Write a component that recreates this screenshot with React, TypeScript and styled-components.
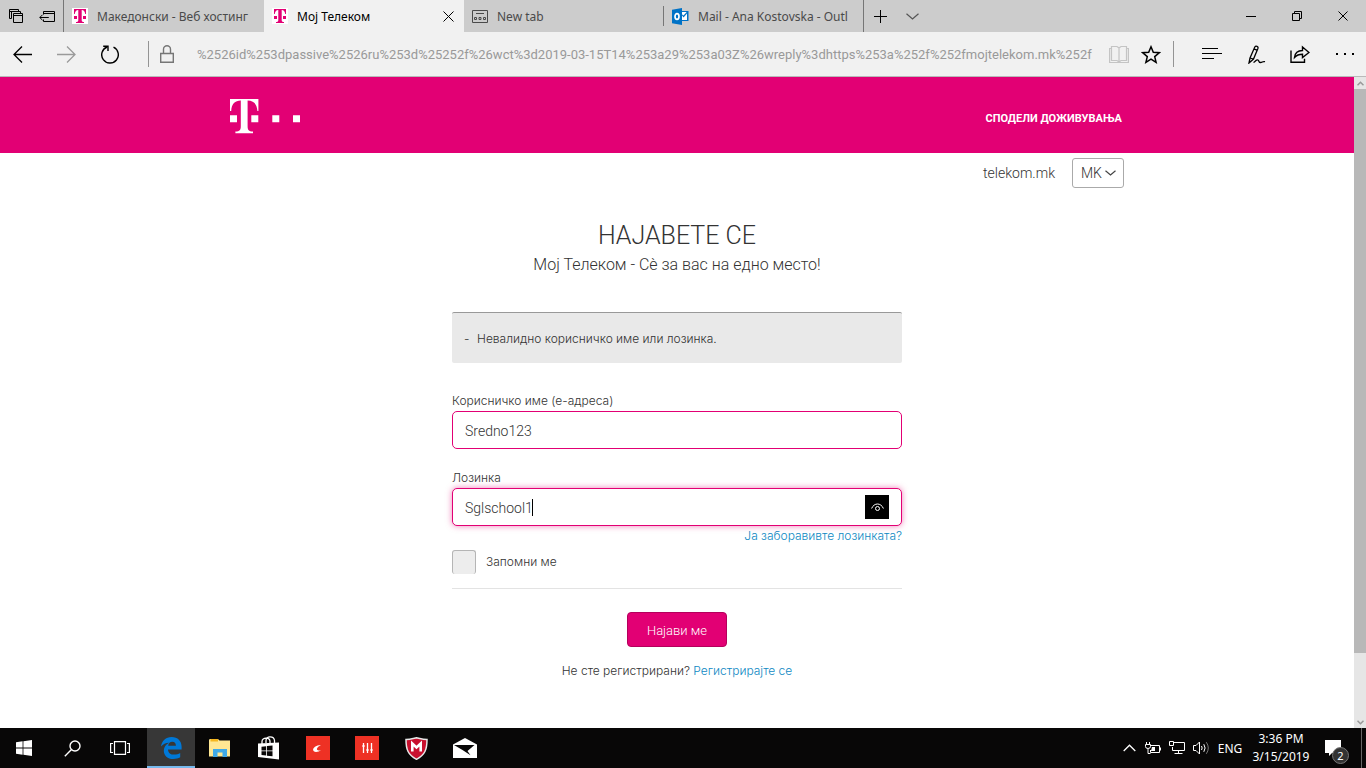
import React from "react";
import styled, { createGlobalStyle } from "styled-components";

const magenta = "#e20074";
const uiFont = `"Noto Sans", "Open Sans", sans-serif`;
const pageFont = `Roboto, "Liberation Sans", sans-serif`;
const smallFont = `Inter, Roboto, sans-serif`;

const GlobalStyle = createGlobalStyle`
  *, *::before, *::after { box-sizing: border-box; }
  body { margin: 0; font-family: ${pageFont}; color: #333; background: #fff; }
  button, input, select { font: inherit; color: inherit; }
  svg { display: block; flex: none; }
`;

const Screen = styled.div`
  display: flex;
  flex-direction: column;
  min-height: 100vh;
`;

/* ---------- browser chrome ---------- */

const PlainButton = styled.button`
  display: flex;
  align-items: center;
  justify-content: center;
  padding: 0;
  border: 0;
  background: none;
`;

const TabBar = styled.div`
  display: flex;
  height: 32px;
  background: #ccc;
  font-family: ${uiFont};
  font-size: 12px;
  color: #4a4a4a;
`;

const TabActions = styled.div`
  display: flex;
  width: 64px;
  border-right: 1px solid #767676;
`;

const TabAction = styled(PlainButton)`
  width: 32px;
`;

const Tab = styled.div<{ $active?: boolean; $divider?: "short" | "full" }>`
  position: relative;
  display: flex;
  align-items: center;
  gap: 9px;
  width: 200px;
  padding: 0 10px 0 8px;
  color: ${(p) => (p.$active ? "#000" : "inherit")};
  background: ${(p) => (p.$active ? "#f1f1f1" : "transparent")};

  &::after {
    content: "";
    display: ${(p) => (p.$divider ? "block" : "none")};
    position: absolute;
    right: 0;
    top: ${(p) => (p.$divider === "full" ? "0" : "6px")};
    bottom: ${(p) => (p.$divider === "full" ? "0" : "6px")};
    width: 1px;
    background: #767676;
  }
`;

const TabTitle = styled.span`
  flex: 1;
  overflow: hidden;
  white-space: nowrap;
`;

const TabTool = styled(PlainButton)`
  width: 32px;
`;

const WindowControls = styled.div`
  display: flex;
  margin-left: auto;
`;

const WindowButton = styled(PlainButton)`
  width: 46px;
`;

const Toolbar = styled.div`
  display: flex;
  align-items: center;
  height: 45px;
  padding-right: 12px;
  background: #f1f1f1;
  border-bottom: 1px solid #b9b9b9;
`;

const ToolButton = styled(PlainButton)<{ $width?: number }>`
  width: ${(p) => p.$width ?? 44}px;
  height: 44px;
`;

const ToolDivider = styled.span<{ $gap?: number }>`
  width: 1px;
  height: 26px;
  margin-left: ${(p) => p.$gap ?? 0}px;
  background: #949494;
`;

const Address = styled.input`
  flex: 1;
  min-width: 0;
  height: 24px;
  padding: 0 0 0 12px;
  border: 0;
  outline: 0;
  background: none;
  font-size: 13px;
  color: #999;
`;

/* ---------- page ---------- */

const Viewport = styled.div`
  display: flex;
  flex: 1;
`;

const Page = styled.div`
  flex: 1;
  min-width: 0;
`;

const Container = styled.div`
  display: flex;
  align-items: center;
  max-width: 894px;
  margin: 0 auto;
`;

const Banner = styled.header`
  padding: 22px 0 19px;
  background: ${magenta};
`;

const Slogan = styled.span`
  margin-left: auto;
  padding: 4px 2px 0 0;
  font-size: 11px;
  line-height: 16px;
  font-weight: 700;
  color: #fff;
`;

const SubNav = styled(Container)`
  justify-content: flex-end;
  gap: 17px;
  padding-top: 5px;
`;

const SiteLink = styled.a`
  font-size: 14px;
  font-weight: 300;
  color: #333;
  text-decoration: none;
`;

const LanguageBox = styled.div`
  position: relative;
`;

const Language = styled.select`
  appearance: none;
  display: block;
  width: 52px;
  height: 30px;
  padding: 0 8px;
  border: 1px solid #aaa;
  border-radius: 3px;
  background: #fff;
  font-size: 14px;
  font-weight: 300;
`;

const LanguageArrow = styled.span`
  position: absolute;
  top: 12px;
  right: 8px;
  pointer-events: none;
`;

const LoginForm = styled.form`
  display: flex;
  flex-direction: column;
  max-width: 450px;
  margin: 0 auto;
  padding-top: 32px;
  font-family: ${smallFont};
  font-size: 12px;
  line-height: 16px;
  font-weight: 300;
`;

const Title = styled.h1`
  margin: 0;
  font-family: ${pageFont};
  font-size: 25px;
  line-height: 32px;
  font-weight: 300;
  text-align: center;
`;

const Subtitle = styled.p`
  margin: 0;
  font-family: ${pageFont};
  font-size: 16px;
  line-height: 26px;
  text-align: center;
`;

const Alert = styled.ul`
  display: flex;
  align-items: center;
  height: 51px;
  margin: 34px 0 30px;
  padding: 2px 12px 0;
  border-top: 1px solid #999;
  border-radius: 2px;
  background: #e9e9e9;
  list-style: none;

  li::before {
    content: "-";
    display: inline-block;
    width: 13px;
  }
`;

const Label = styled.label``;

const Field = styled.div`
  position: relative;
  margin: 2px 0 21px;
`;

const TextInput = styled.input<{ $focused?: boolean }>`
  display: block;
  width: 100%;
  height: 38px;
  padding: 2px 12px 0;
  border: 1px solid ${magenta};
  border-radius: 5px;
  outline: 0;
  background: #fff;
  box-shadow: ${(p) => (p.$focused ? "0 0 6px rgba(226, 0, 116, 0.5)" : "none")};
  font-family: ${pageFont};
  font-size: 14px;
  font-weight: 300;
`;

const PasswordField = styled(Field)`
  margin-bottom: 2px;
`;

const Caret = styled.span`
  position: absolute;
  left: 80px;
  top: 11px;
  width: 1px;
  height: 17px;
  background: #000;
`;

const Reveal = styled(PlainButton)`
  position: absolute;
  right: 13px;
  top: 7px;
  width: 24px;
  height: 24px;
  background: #000;
`;

const Link = styled.a`
  color: #0e88c3;
  text-decoration: none;
`;

const ForgotLink = styled(Link)`
  align-self: flex-end;
`;

const Remember = styled.div`
  display: flex;
  align-items: center;
  gap: 10px;
  margin-top: 6px;
  padding-bottom: 14px;
  border-bottom: 1px solid #e3e3e3;
`;

const Checkbox = styled.input`
  appearance: none;
  width: 24px;
  height: 24px;
  margin: 0;
  border: 1px solid #b5b5b5;
  border-bottom: 0;
  border-radius: 3px;
  background: #ededed;
`;

const Submit = styled.button`
  align-self: center;
  min-width: 100px;
  height: 35px;
  margin: 23px 0 16px;
  padding: 3px 18px 0;
  border: 1px solid #b4005c;
  border-radius: 4px;
  background: ${magenta};
  color: #fff;
  font-family: ${pageFont};
  font-size: 13px;
`;

const Register = styled.p`
  margin: 0;
  text-align: center;
`;

const Scrollbar = styled.div`
  display: flex;
  flex-direction: column;
  align-items: center;
  width: 12px;
  background: #e6e6e6;
`;

const ScrollArrow = styled(PlainButton)`
  width: 12px;
  height: 12px;
`;

const ScrollTrack = styled.div`
  flex: 1;
  align-self: stretch;
`;

const ScrollThumb = styled.div`
  height: 90%;
  background: #b8b8b8;
`;

/* ---------- taskbar ---------- */

const Taskbar = styled.footer`
  display: flex;
  height: 40px;
  background: #080707;
  color: #fff;
  font-family: ${uiFont};
  font-size: 12px;
`;

const TaskGroup = styled.div<{ $gap?: number }>`
  display: flex;
  gap: ${(p) => p.$gap ?? 0}px;
  margin-right: 3px;
`;

const TaskButton = styled(PlainButton)<{ $active?: boolean }>`
  width: 48px;
  height: 40px;
  padding-top: ${(p) => (p.$active ? 2 : 0)}px;
  background: ${(p) => (p.$active ? "#373737" : "transparent")};
  border-bottom: ${(p) => (p.$active ? "2px solid #76b9ed" : "0")};
`;

const Tray = styled.div`
  display: flex;
  align-items: center;
  margin-left: auto;
`;

const TrayButton = styled(PlainButton)<{ $width?: number }>`
  width: ${(p) => p.$width ?? 24}px;
  height: 40px;
`;

const Clock = styled.time`
  width: 68px;
  line-height: 18px;
  text-align: center;
`;

const Notifications = styled(PlainButton)`
  position: relative;
  width: 46px;
  height: 40px;
  padding-right: 10px;
`;

const Count = styled.span`
  position: absolute;
  right: 12px;
  bottom: 4px;
  width: 17px;
  height: 17px;
  border: 1px solid #777;
  border-radius: 50%;
  background: #333;
  font-size: 11px;
  line-height: 15px;
  text-align: center;
`;

const ShowDesktop = styled(PlainButton)`
  width: 5px;
  height: 40px;
  border-left: 1px solid #666;
`;

/* ---------- drawings ---------- */

type IconProps = {
  w: number;
  h: number;
  color?: string;
  fill?: string;
  stroke?: number;
  children: React.ReactNode;
};

const Icon = ({ w, h, color = "#000", fill = "none", stroke = 1, children }: IconProps) => (
  <svg
    width={w}
    height={h}
    viewBox={`0 0 ${w} ${h}`}
    fill={fill}
    stroke={stroke ? color : "none"}
    strokeWidth={stroke}
    aria-hidden="true"
  >
    {children}
  </svg>
);

const TelekomLogo = () => (
  <Icon w={71} h={35} fill="#fff" stroke={0}>
    <path d="M0 0H28.4V12H27.4C27 5 23.5 1.6 17.6 1.6V27C17.6 31 18.6 32.3 23 32.6V34.3H5.4V32.6C9.8 32.3 10.8 31 10.8 27V1.6C5 1.6 1.6 5 1.2 12H0Z" />
    <path d="M0 16.3h7v7H0zM21.3 16.3h7v7h-7zM42.3 16.3h7v7h-7zM63 16.3h7v7h-7z" />
  </Icon>
);

const TelekomFavicon = () => (
  <Icon w={16} h={16} stroke={0}>
    <rect width="16" height="16" fill="#fff" />
    <g fill={magenta}>
      <path d="M2 1H14V6H13.2C13 3.5 12 2 9.7 1.9V12C9.7 13.6 10.3 14 12 14.1V15H4V14.1C5.7 14 6.3 13.6 6.3 12V1.9C4 2 3 3.5 2.8 6H2Z" />
      <path d="M2 8h3v3H2zM11 8h3v3h-3z" />
    </g>
  </Icon>
);

const OutlookIcon = () => (
  <Icon w={17} h={17} stroke={0}>
    <path d="M9 3h7.500v10H9z" fill="#0072c6" />
    <path d="M9.500 6.500V12H15V5.500L11.500 9.500z" fill="#fff" />
    <path d="M9.500 4h5.200l-3.200 3.500-2-1.500z" fill="#fff" />
    <path d="M0 1.800L10 0v17L0 15.200z" fill="#0072c6" />
    <ellipse cx="5" cy="8.500" rx="2" ry="2.800" stroke="#fff" strokeWidth="1.700" />
  </Icon>
);

const Cross = ({ size }: { size: number }) => (
  <Icon w={size} h={size}>
    <path d={`M.5 .5L${size - 0.5} ${size - 0.5}M${size - 0.5} .5L.5 ${size - 0.5}`} />
  </Icon>
);

const Chevron = ({ w, h, color }: { w: number; h: number; color: string }) => (
  <Icon w={w} h={h} color={color} stroke={1.2}>
    <path d={`M.5 .7L${w / 2} ${h - 1}L${w - 0.5} .7`} />
  </Icon>
);

export default function App() {
  return (
    <Screen>
      <GlobalStyle />

      <TabBar>
        <TabActions>
          <TabAction aria-label="Tabs set aside">
            <Icon w={14} h={14}>
              <path d="M2.500 9.500H.5V.5h9v2M.5 2.500h9M2.500 9.500v-7h9v2" />
              <path d="M4.500 4.500h9v9h-9zM4.500 6.500h9" />
            </Icon>
          </TabAction>
          <TabAction aria-label="Set tabs aside">
            <Icon w={16} h={11}>
              <path d="M4.500 3.500v-3h11v10h-11v-2M4.500 2.500h11M.8 6.500h9M3.500 3.800L.8 6.500l2.700 2.700" />
            </Icon>
          </TabAction>
        </TabActions>
        <Tab>
          <TelekomFavicon />
          <TabTitle>Македонски - Веб хостинг</TabTitle>
        </Tab>
        <Tab $active>
          <TelekomFavicon />
          <TabTitle>Мој Телеком</TabTitle>
          <PlainButton aria-label="Close tab">
            <Cross size={11} />
          </PlainButton>
        </Tab>
        <Tab $divider="short">
          <Icon w={16} h={13} color="#4a4a4a">
            <path d="M.5 .5h15v12H.5zM4 3.500h8M2.500 7.500h2v2h-2zM7 7.500h2v2H7zM11.500 7.500h2v2h-2z" />
          </Icon>
          <TabTitle>New tab</TabTitle>
        </Tab>
        <Tab $divider="full">
          <OutlookIcon />
          <TabTitle>Mail - Ana Kostovska - Outl</TabTitle>
        </Tab>
        <TabTool aria-label="New tab">
          <Icon w={13} h={13}>
            <path d="M6.500 0v13M0 6.500h13" />
          </Icon>
        </TabTool>
        <TabTool aria-label="Tab previews">
          <Chevron w={13} h={7} color="#555" />
        </TabTool>
        <WindowControls>
          <WindowButton aria-label="Minimize">
            <Icon w={10} h={1}>
              <path d="M0 .5h10" />
            </Icon>
          </WindowButton>
          <WindowButton aria-label="Restore">
            <Icon w={10} h={10}>
              <path d="M.5 2.500h7v7h-7zM2.500 2.500v-2h7v7h-2" />
            </Icon>
          </WindowButton>
          <WindowButton aria-label="Close">
            <Cross size={10} />
          </WindowButton>
        </WindowControls>
      </TabBar>

      <Toolbar>
        <ToolButton aria-label="Back">
          <Icon w={19} h={17} stroke={1.3}>
            <path d="M19 8.500H1M9 .5L1 8.500l8 8" />
          </Icon>
        </ToolButton>
        <ToolButton aria-label="Forward">
          <Icon w={19} h={17} color="#9a9a9a" stroke={1.3}>
            <path d="M0 8.500h18M10 .5l8 8-8 8" />
          </Icon>
        </ToolButton>
        <ToolButton aria-label="Refresh">
          <Icon w={18} h={19} stroke={1.4}>
            <path d="M12.500 2.200A8.300 8.300 0 1 1 6 2M2.200 1.300H7V6" />
          </Icon>
        </ToolButton>
        <ToolDivider $gap={16} />
        <ToolButton $width={36} aria-label="Site information">
          <Icon w={14} h={18} color="#767676" stroke={1.4}>
            <path d="M.7 8.500h12.600v8.800H.7zM3.500 8.500V4.200a3.500 3.500 0 0 1 7 0v4.300" />
          </Icon>
        </ToolButton>
        <Address
          aria-label="Address"
          readOnly
          value="%2526id%253dpassive%2526ru%253d%25252f%26wct%3d2019-03-15T14%253a29%253a03Z%26wreply%3dhttps%253a%252f%252fmojtelekom.mk%252f"
        />
        <ToolButton $width={32} aria-label="Reading view">
          <Icon w={20} h={19} color="#c4c4c4" stroke={1.2}>
            <path d="M2.500 1.500h5.500l2 1.500 2-1.500h5.500V15.500H12L10 17l-2-1.500H2.500zM10 3v14M2.500 3.500H.6v14h18.800v-14h-1.900" />
          </Icon>
        </ToolButton>
        <ToolButton $width={32} aria-label="Add to favorites">
          <Icon w={20} h={19} stroke={1.5}>
            <path d="M10 1.800l2.300 5.400 5.900.5-4.500 3.900 1.400 5.700-5.100-3.100-5.100 3.100 1.400-5.700-4.500-3.900 5.900-.5z" />
          </Icon>
        </ToolButton>
        <ToolDivider $gap={6} />
        <ToolButton $width={76} aria-label="Hub">
          <Icon w={20} h={12} stroke={1}>
            <path d="M0 .5h16M0 5.500h20M0 10.500h12" />
          </Icon>
        </ToolButton>
        <ToolButton $width={14} aria-label="Make a web note">
          <Icon w={18} h={19} stroke={1.3}>
            <path d="M1 18l1-5L6.800 2C7.800.3 10.600 1.300 9.900 3.400L5.500 14zM2 13l3.500 1M5.800 3.800L9 5.200M5.500 17.500c2-1 3-3.500 4.500-2.500s.5 2.500 2.500 2.500 2-1.500 4.500-.8" />
          </Icon>
        </ToolButton>
        <ToolButton $width={72} aria-label="Share">
          <Icon w={20} h={18} stroke={1.4}>
            <path d="M1 5.500v11.700h13.500v-3.500M4.500 12.500C5 8 8 5.500 12.500 5.500V2L19 7.500l-6.500 5V9.300c-3.500 0-6 1-8 3.200z" />
          </Icon>
        </ToolButton>
        <ToolButton $width={18} aria-label="Settings and more">
          <Icon w={18} h={2} fill="#000" stroke={0}>
            <path d="M0 0h2v2H0zM8 0h2v2H8zM16 0h2v2h-2z" />
          </Icon>
        </ToolButton>
      </Toolbar>

      <Viewport>
        <Page>
          <Banner>
            <Container>
              <TelekomLogo />
              <Slogan>СПОДЕЛИ ДОЖИВУВАЊА</Slogan>
            </Container>
          </Banner>
          <SubNav>
            <SiteLink href="#telekom">telekom.mk</SiteLink>
            <LanguageBox>
              <Language aria-label="Јазик" defaultValue="MK">
                <option>MK</option>
              </Language>
              <LanguageArrow>
                <Chevron w={11} h={6} color="#444" />
              </LanguageArrow>
            </LanguageBox>
          </SubNav>

          <LoginForm onSubmit={(e) => e.preventDefault()}>
            <Title>НАЈАВЕТЕ СЕ</Title>
            <Subtitle>Мој Телеком - Сè за вас на едно место!</Subtitle>
            <Alert>
              <li>Невалидно корисничко име или лозинка.</li>
            </Alert>
            <Label htmlFor="user">Корисничко име (е-адреса)</Label>
            <Field>
              <TextInput id="user" defaultValue="Sredno123" />
            </Field>
            <Label htmlFor="password">Лозинка</Label>
            <PasswordField>
              <TextInput id="password" $focused defaultValue="Sglschool1" />
              <Caret />
              <Reveal type="button" aria-label="Прикажи лозинка">
                <Icon w={13} h={9} color="#fff">
                  <path d="M.6 5.500C3-.5 10-.5 12.400 5.500" />
                  <circle cx="6.500" cy="5.500" r="2" />
                </Icon>
              </Reveal>
            </PasswordField>
            <ForgotLink href="#forgot">Ја заборавивте лозинката?</ForgotLink>
            <Remember>
              <Checkbox type="checkbox" id="remember" />
              <Label htmlFor="remember">Запомни ме</Label>
            </Remember>
            <Submit>Најави ме</Submit>
            <Register>
              Не сте регистрирани? <Link href="#register">Регистрирајте се</Link>
            </Register>
          </LoginForm>
        </Page>
        <Scrollbar>
          <ScrollArrow aria-label="Scroll up">
            <Icon w={7} h={5} color="#999" stroke={1.5}>
              <path d="M.5 4.300l3-3 3 3" />
            </Icon>
          </ScrollArrow>
          <ScrollTrack>
            <ScrollThumb />
          </ScrollTrack>
          <ScrollArrow aria-label="Scroll down">
            <Icon w={7} h={5} color="#999" stroke={1.5}>
              <path d="M.5 .7l3 3 3-3" />
            </Icon>
          </ScrollArrow>
        </Scrollbar>
      </Viewport>

      <Taskbar>
        <TaskGroup>
          <TaskButton aria-label="Start">
            <Icon w={16} h={16} fill="#fff" stroke={0}>
              <path d="M0 2.200L6.600 1.300V7.600H0zM7.400 1.200L16 0v7.600H7.400zM0 8.400h6.600v6.300L0 13.800zM7.400 8.400H16V16l-8.600-1.200z" />
            </Icon>
          </TaskButton>
          <TaskButton aria-label="Search">
            <Icon w={17} h={17} color="#fff" stroke={1.4}>
              <circle cx="11" cy="6" r="5" />
              <path d="M7.500 9.500L.8 16.200" />
            </Icon>
          </TaskButton>
          <TaskButton aria-label="Task view">
            <Icon w={20} h={14} color="#fff" stroke={1.2}>
              <path d="M4.500 .6h11v12.800h-11zM3 2.500H.6v9H3M17 2.500h2.400v9H17" />
            </Icon>
          </TaskButton>
        </TaskGroup>
        <TaskGroup $gap={1}>
          <TaskButton $active aria-label="Microsoft Edge">
            <Icon w={21} h={22} fill="#0078d7" stroke={0}>
              <path d="M0 9.500C.8 4 4.700 0 10.700 0 16.700 0 20.600 4.200 20.600 9.600V12.400H7C7.200 16 9.800 17.600 13 17.600c2.600 0 4.500-.7 6.200-1.700v4.400C17.300 21.400 15 22 12.200 22 6.600 22 2.800 18.600 2.800 13.700c0-3.500 2-6.500 5.200-8C4.700 5.900 2 7.200 0 9.500zM7.200 8.700h7.700c0-2.300-1.300-3.900-3.600-3.900S7.500 6.400 7.200 8.700z" />
            </Icon>
          </TaskButton>
          <TaskButton aria-label="File Explorer">
            <Icon w={22} h={19} stroke={0}>
              <path d="M0 1.500C0 .7.500 0 1.200 0H9l1.500 1.500H21v16H0z" fill="#ffe793" />
              <path d="M1.500 0H9v2.500H1.500z" fill="#f5b61f" />
              <path d="M4 10h14v8h-4.500v-4.500h-5V18H4z" fill="#3fa9e8" />
            </Icon>
          </TaskButton>
          <TaskButton aria-label="Microsoft Store">
            <Icon w={22} h={24} stroke={0}>
              <path d="M0 7.500L21 6.500v17L0 21z" fill="#fff" />
              <path d="M4 8V5.500C4 1 12 1 12 5.500V8M8 7V4.500C8-.5 16 0 16.500 4.500V7" stroke="#fff" strokeWidth="1.300" />
              <path d="M3.500 10.700l4.700-.5v4.300H3.500zM9 10.100l5.500-.6v5H9zM3.500 15.300h4.700v4.300l-4.700-.5zM9 15.300h5.500v5L9 19.700z" fill="#080707" />
            </Icon>
          </TaskButton>
          <TaskButton aria-label="Creative">
            <Icon w={24} h={24} stroke={0}>
              <rect width="24" height="24" fill="#ee3124" />
              <path d="M15 9.200C11 9 7.300 11 7.100 13.600c-.2 3.200 5 3 8.200.4-2.600.9-4.500.6-4.400-.9.100-1.800 2-3.200 4.100-3.900z" fill="#fff" />
              <path d="M12.500 12.500l4-4M13.500 12.500h2.500" stroke="#fff" />
            </Icon>
          </TaskButton>
          <TaskButton aria-label="Audio mixer">
            <Icon w={24} h={24} stroke={0}>
              <rect width="24" height="24" fill="#ee3124" />
              <path d="M8.500 7v10M12.500 7v10M16.500 7v10" stroke="#fff" strokeWidth="1.300" />
              <path d="M7.500 9h2v2h-2zM11.500 13h2v2h-2zM15.500 13h2v2h-2z" fill="#fff" />
            </Icon>
          </TaskButton>
          <TaskButton aria-label="McAfee">
            <Icon w={23} h={23} stroke={0}>
              <path d="M1 2.500C5 2.500 8 1.500 11.500.7 15 1.500 18 2.500 22 2.500c0 10-2 15.500-10.500 19.800C3 18 1 12.500 1 2.500z" fill="#c8102e" stroke="#e8e8e8" strokeWidth="1.500" />
              <path d="M7.300 14.500V6.500l4.200 4 4.200-4v8" stroke="#fff" strokeWidth="2.600" />
            </Icon>
          </TaskButton>
          <TaskButton aria-label="Mail">
            <Icon w={24} h={20} stroke={0}>
              <path d="M0 6.500L12 0l12 6.500V20H0z" fill="#fff" />
              <path d="M1 7h20.500l-7 6 3 4.200L9.500 12z" fill="#080707" />
            </Icon>
          </TaskButton>
        </TaskGroup>
        <Tray>
          <TrayButton aria-label="Show hidden icons">
            <Icon w={13} h={8} color="#fff" stroke={1.3}>
              <path d="M.7 7l5.800-5.800L12.300 7" />
            </Icon>
          </TrayButton>
          <TrayButton aria-label="Battery">
            <Icon w={16} h={13} color="#fff">
              <path d="M6 3.500h8.500v7H5.500V8M15.500 5.500v3" />
              <path d="M.5 2.500h5v2a2.500 2 0 0 1-5 0zM1.500 0v2.500M4.500 0v2.500M3 7v4.500h2.500" />
              <path d="M7 5h3v4H6z" fill="#fff" stroke="none" />
            </Icon>
          </TrayButton>
          <TrayButton aria-label="Network">
            <Icon w={16} h={14} color="#fff">
              <path d="M5 1.500h10.500v8h-12V6M.5 .5h4v4h-4zM9.500 9.500v3M5.500 12.500h8" />
            </Icon>
          </TrayButton>
          <TrayButton aria-label="Volume">
            <Icon w={17} h={14} color="#fff">
              <path d="M.5 4.500h2.500l3.500-3.500v12L3 9.500H.5zM8.500 5q1.300 2 0 4M10.800 3.200q2.600 3.800 0 7.600" />
              <path d="M13.300 1.200q4 5.800 0 11.600" stroke="#777" />
            </Icon>
          </TrayButton>
          <TrayButton $width={34} aria-label="Input language">ENG</TrayButton>
          <Clock>
            3:36 PM
            <br />
            3/15/2019
          </Clock>
          <Notifications aria-label="Notifications">
            <Icon w={16} h={16} stroke={0}>
              <path d="M0 0h16v13H7l-3 3v-3H0z" fill="#fff" />
              <path d="M3 3.500h10M3 6.500h10M3 9.500h6" stroke="#080707" />
            </Icon>
            <Count>2</Count>
          </Notifications>
          <ShowDesktop aria-label="Show desktop" />
        </Tray>
      </Taskbar>
    </Screen>
  );
}
